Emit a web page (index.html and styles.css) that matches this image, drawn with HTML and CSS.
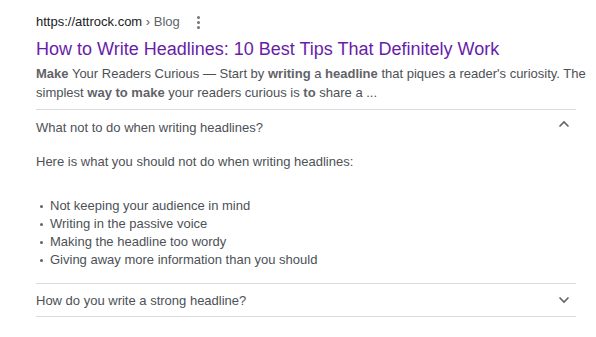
FILE: index.html
```html
<!DOCTYPE html>
<html lang="en">
<head>
    <meta charset="UTF-8">
    <meta name="viewport" content="width=device-width, initial-scale=1.0">
    <title>How to Write Headlines</title>
    <link rel="stylesheet" href="styles.css">
</head>
<body>
<div id="result">
    <div class="result_url">
        <span>https://attrock.com</span><span class="crumb">&nbsp;› Blog</span><span class="kebab"><i></i><i></i><i></i></span>
    </div>
    <a class="result_title" href="#">How to Write Headlines: 10 Best Tips That Definitely Work</a>
    <div class="snippet">
        <b>Make</b> Your Readers Curious — Start by <b>writing</b> a <b>headline</b> that piques a reader's curiosity. The<br>
        simplest <b>way to make</b> your readers curious is <b>to</b> share a ...
    </div>

    <div class="faq open">
        <div class="faq_question">
            <span>What not to do when writing headlines?</span>
            <svg class="chevron" width="12" height="8" viewBox="0 0 12 8"><path d="M1.5 6.5 L6 2 L10.5 6.5" fill="none" stroke="#5f6368" stroke-width="1.6"/></svg>
        </div>
        <div class="faq_answer">
            <p>Here is what you should not do when writing headlines:</p>
            <ul>
                <li>Not keeping your audience in mind</li>
                <li>Writing in the passive voice</li>
                <li>Making the headline too wordy</li>
                <li>Giving away more information than you should</li>
            </ul>
        </div>
    </div>
    <div class="faq">
        <div class="faq_question">
            <span>How do you write a strong headline?</span>
            <svg class="chevron" width="12" height="8" viewBox="0 0 12 8"><path d="M1.5 1.5 L6 6 L10.5 1.5" fill="none" stroke="#5f6368" stroke-width="1.6"/></svg>
        </div>
    </div>
</div>
</body>
</html>
```

FILE: styles.css
```css
body {
    margin: 0;
    background-color: white;
    font-family: "Liberation Sans", Arial, sans-serif;
    color: #4d5156;
}

#result {
    width: 540px;
    padding: 13px 0 0 36px;
}

.result_url {
    display: flex;
    align-items: center;
    height: 18px;
    font-size: 13px;
    line-height: 18px;
    color: #202124;
    white-space: nowrap;
}

.result_url .crumb {
    color: #5f6368;
}

.kebab {
    display: flex;
    flex-direction: column;
    gap: 2px;
    margin-left: 17px;
}

.kebab i {
    width: 3px;
    height: 3px;
    border-radius: 50%;
    background-color: #70757a;
}

.result_title {
    display: block;
    margin-top: 5px;
    font-size: 18px;
    line-height: 26px;
    color: #681da8;
    text-decoration: none;
}

.snippet {
    margin-top: 2px;
    font-size: 13px;
    line-height: 19px;
    padding-bottom: 7px;
    white-space: nowrap;
}

.snippet b {
    color: #5f6368;
    font-weight: bold;
}

.faq {
    border-top: 1px solid #dadce0;
}

.faq:last-child {
    border-bottom: 1px solid #dadce0;
}

.faq_question {
    display: flex;
    align-items: center;
    justify-content: space-between;
    height: 34px;
    font-size: 13px;
    color: #4d5156;
}

.faq + .faq .faq_question {
    height: 32px;
}

.chevron {
    margin-right: 6px;
}

.open .chevron {
    margin-top: -6px;
}

.faq_answer {
    padding: 9px 0 14px 0;
    font-size: 13px;
    line-height: 18px;
}

.faq_answer p {
    margin: 0 0 26px 0;
}

.faq_answer ul {
    margin: 0;
    padding-left: 14px;
    list-style: none;
}

.faq_answer li {
    position: relative;
}

.faq_answer li::before {
    content: "";
    position: absolute;
    left: -10px;
    top: 8px;
    width: 3px;
    height: 3px;
    background-color: #5f6368;
    border-radius: 50%;
}
```
